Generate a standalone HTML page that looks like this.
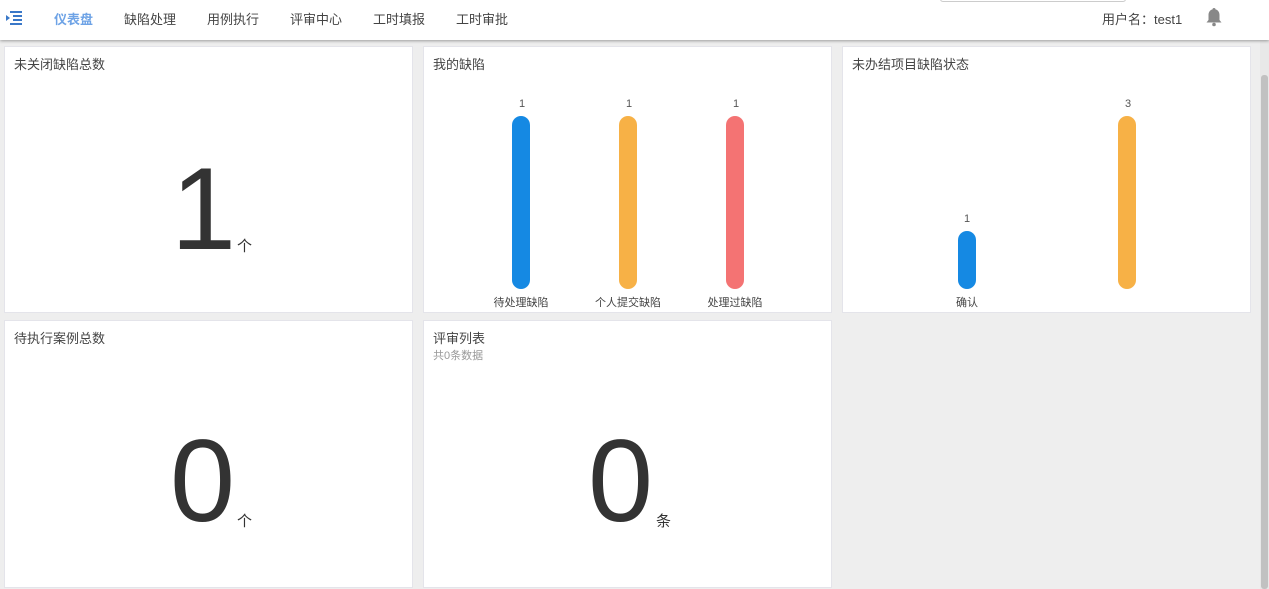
<!DOCTYPE html>
<html><head><meta charset="utf-8"><style>
*{margin:0;padding:0;box-sizing:border-box}
body{width:1269px;height:589px;overflow:hidden;background:#eeeeee;font-family:"Liberation Sans","Noto Sans CJK SC",sans-serif;position:relative;color:#333}
.hdr{position:absolute;left:0;top:0;width:1269px;height:40px;background:#fff;box-shadow:0 1px 3px rgba(0,0,0,.35);z-index:2}
.nav{position:absolute;top:9px;font-size:13px;color:#444}
.card{position:absolute;background:#fff;border:1px solid #e4e4ea}
.t{position:absolute;left:9px;top:7px;font-size:13px;color:#444}
.big{position:absolute;font-size:117px;line-height:1;color:#333;font-weight:normal}
.unit{position:absolute;font-size:15px;color:#333}
.bar{position:absolute;width:18px;border-radius:9px}
.v{position:absolute;font-size:11px;color:#555;width:30px;text-align:center}
.l{position:absolute;font-size:11px;color:#444;width:90px;text-align:center}
</style></head><body>
<div class="hdr">
<svg style="position:absolute;left:5px;top:11px" width="17" height="14" viewBox="0 0 17 14"><rect x="5" y="0" width="12" height="2" fill="#3a78c8"/><rect x="8" y="4" width="9" height="2" fill="#3a78c8"/><rect x="8" y="8" width="9" height="2" fill="#3a78c8"/><rect x="5" y="12" width="12" height="2" fill="#3a78c8"/><path d="M1 4L5 7L1 10Z" fill="#3a78c8"/></svg>
<span class="nav" style="left:54px;color:#6ea3e6;font-weight:bold">仪表盘</span>
<span class="nav" style="left:124px">缺陷处理</span>
<span class="nav" style="left:207px">用例执行</span>
<span class="nav" style="left:290px">评审中心</span>
<span class="nav" style="left:373px">工时填报</span>
<span class="nav" style="left:456px">工时审批</span>
<div style="position:absolute;left:940px;top:-2px;width:186px;height:4px;border:1px solid #ccc;border-top:none;background:#fff;border-radius:0 0 3px 3px"></div>
<span class="nav" style="left:1102px;font-size:13px;top:9px">用户名：test1</span>
<svg style="position:absolute;left:1205px;top:7px" width="18" height="20" viewBox="0 0 18 20"><path d="M9 1c1 0 1.5.6 1.5 1.4C13 3 14.5 5.2 14.5 8v5l2 2.5H1.5l2-2.5V8c0-2.8 1.5-5 4-5.6C7.5 1.6 8 1 9 1z" fill="#888"/><circle cx="9" cy="17.5" r="1.8" fill="#888"/></svg>
</div>

<div class="card" style="left:4px;top:46px;width:409px;height:267px">
<div class="t">未关闭缺陷总数</div>
<div class="big" style="left:166px;top:103px">1</div>
<div class="unit" style="left:232px;top:188px">个</div>
</div>

<div class="card" style="left:423px;top:46px;width:409px;height:267px">
<div class="t">我的缺陷</div>
<div class="v" style="left:83px;top:51px">1</div><div class="bar" style="left:88px;top:69px;height:173px;background:#1589e3"></div><div class="l" style="left:52px;top:247px">待处理缺陷</div>
<div class="v" style="left:190px;top:51px">1</div><div class="bar" style="left:195px;top:69px;height:173px;background:#f7b146"></div><div class="l" style="left:159px;top:247px">个人提交缺陷</div>
<div class="v" style="left:297px;top:51px">1</div><div class="bar" style="left:302px;top:69px;height:173px;background:#f47373"></div><div class="l" style="left:266px;top:247px">处理过缺陷</div>
</div>

<div class="card" style="left:842px;top:46px;width:409px;height:267px">
<div class="t">未办结项目缺陷状态</div>
<div class="v" style="left:109px;top:166px">1</div><div class="bar" style="left:115px;top:184px;height:58px;background:#1589e3"></div><div class="l" style="left:79px;top:247px">确认</div>
<div class="v" style="left:270px;top:51px">3</div><div class="bar" style="left:275px;top:69px;height:173px;background:#f7b146"></div>
</div>

<div class="card" style="left:4px;top:320px;width:409px;height:268px">
<div class="t">待执行案例总数</div>
<div class="big" style="left:165px;top:101px">0</div>
<div class="unit" style="left:232px;top:189px">个</div>
</div>

<div class="card" style="left:423px;top:320px;width:409px;height:268px">
<div class="t">评审列表</div>
<div style="position:absolute;left:9px;top:26px;font-size:11px;color:#999">共0条数据</div>
<div class="big" style="left:164px;top:101px">0</div>
<div class="unit" style="left:232px;top:189px">条</div>
</div>

<div style="position:absolute;left:1260px;top:40px;width:9px;height:549px;background:#e8e8e8"></div>
<div style="position:absolute;left:1261px;top:75px;width:7px;height:514px;background:#c1c1c1;border-radius:3px"></div>
</body></html>
